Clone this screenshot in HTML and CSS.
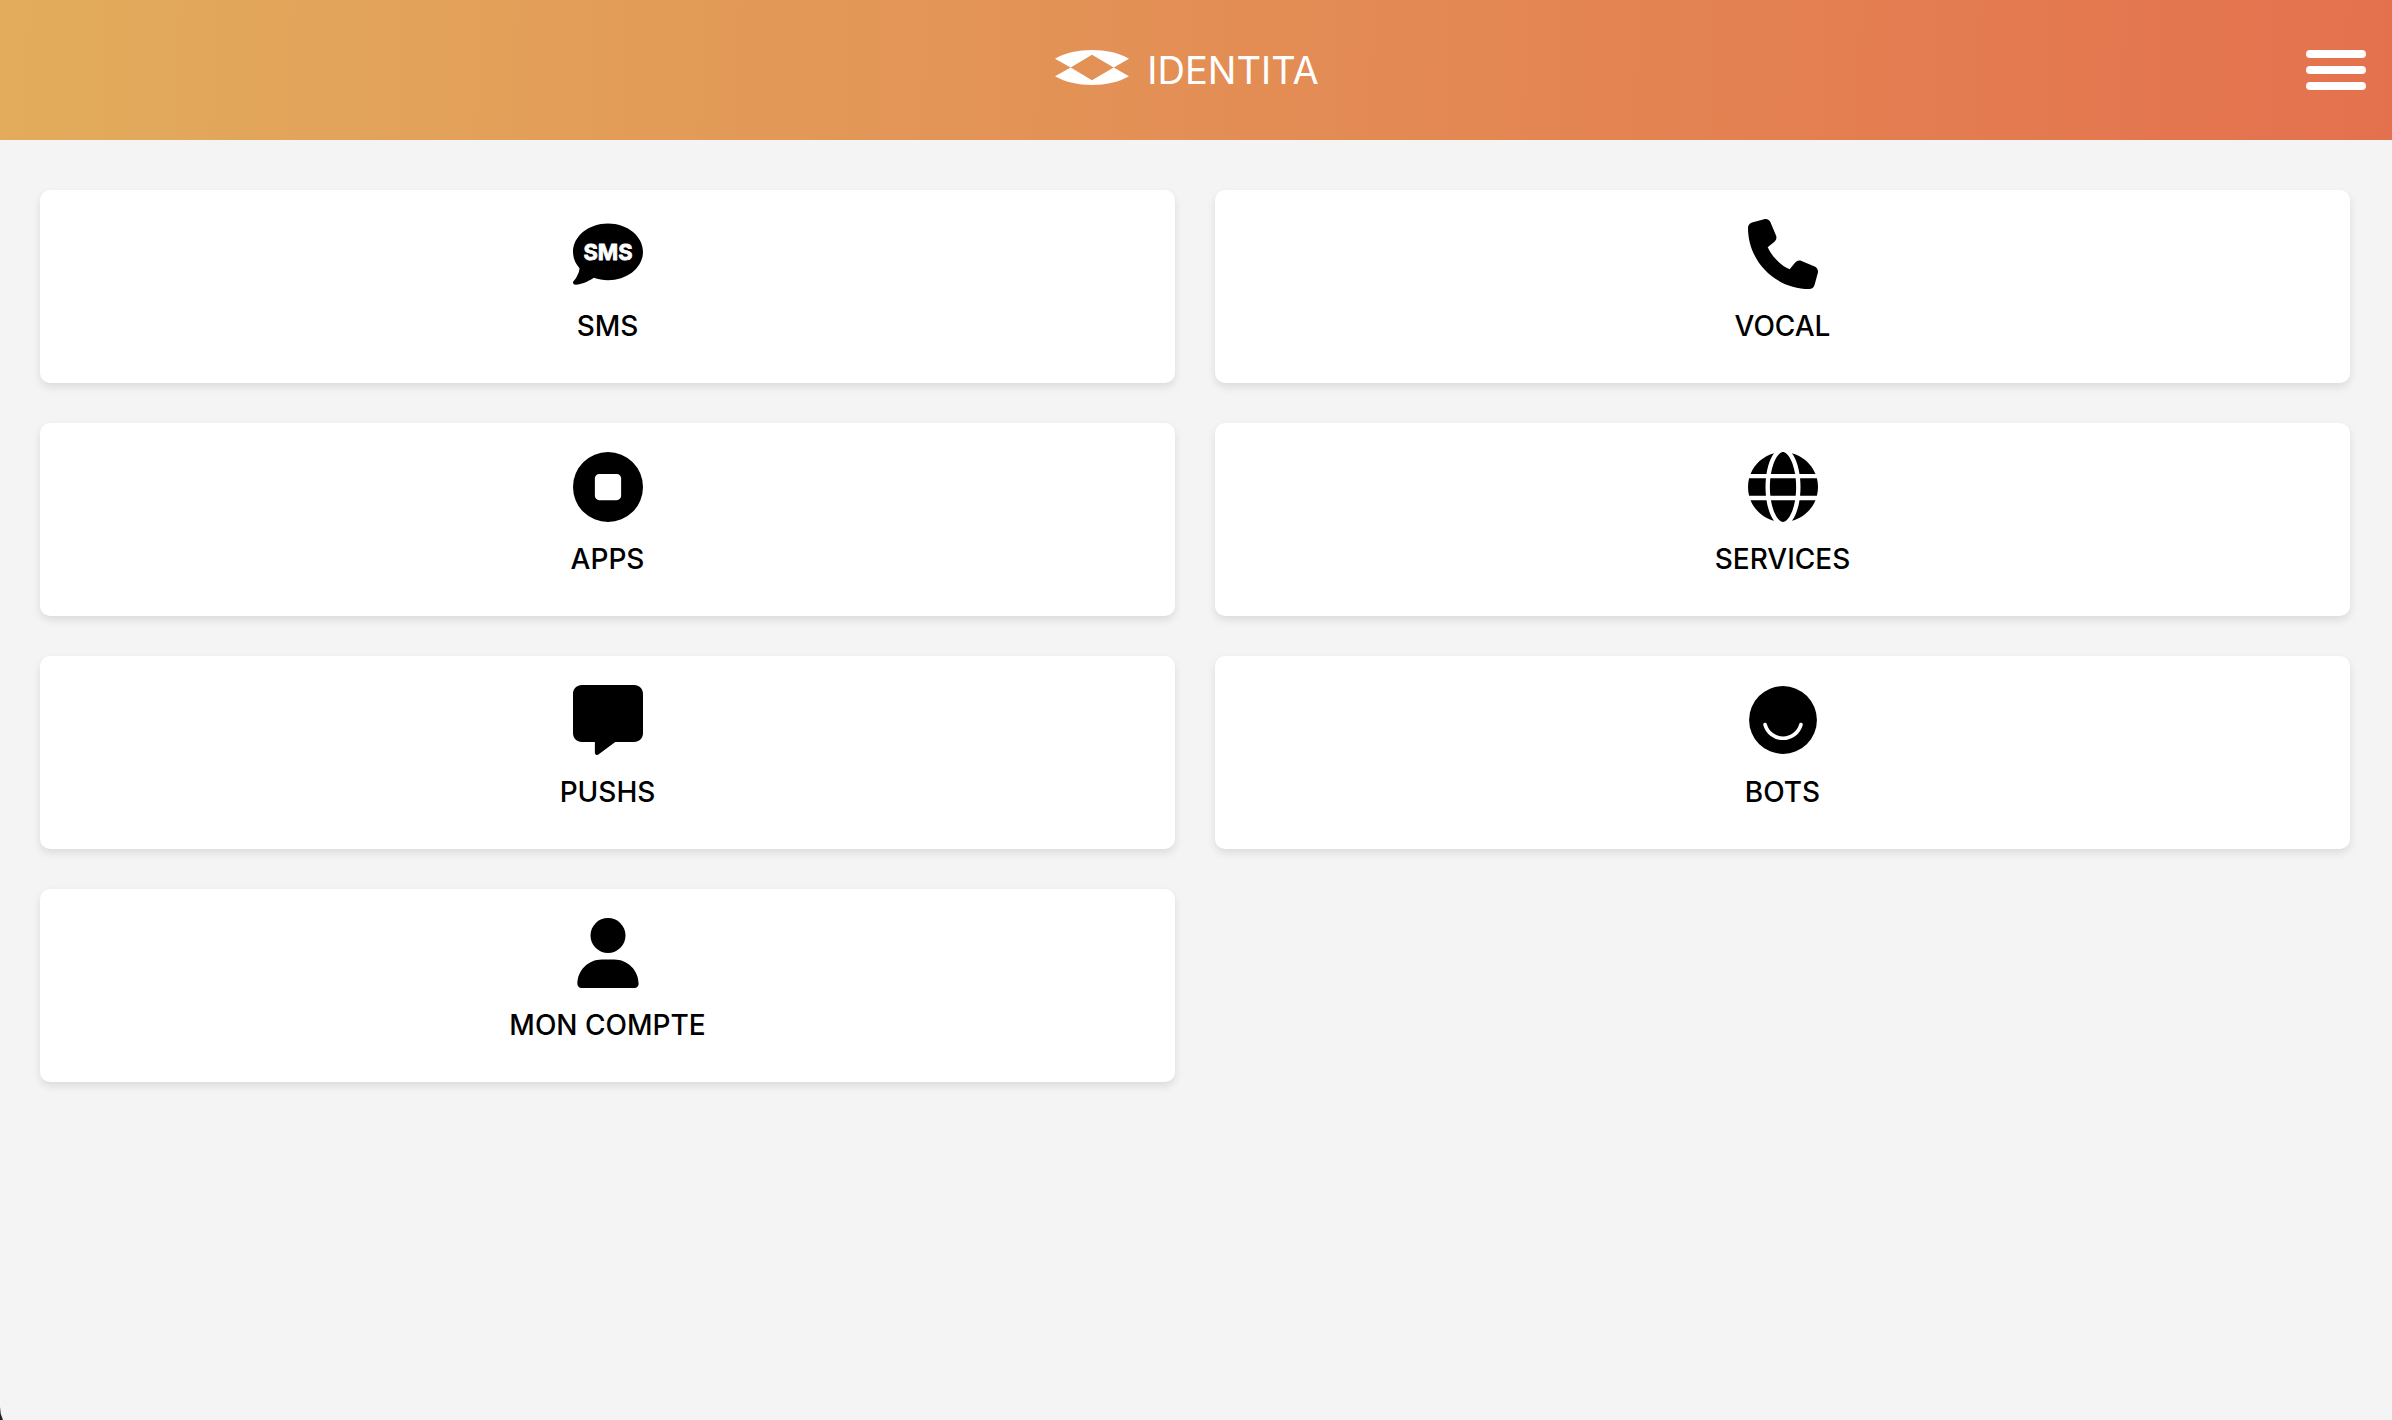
FILE: index.html
```html
<!DOCTYPE html>
<html lang="fr">
<head>
  <meta charset="UTF-8" />
  <meta name="viewport" content="width=device-width, initial-scale=1.0" />
  <title>Identita</title>
  <link rel="stylesheet" href="styles.css">
</head>
<body>

  <header class="header">
    <a class="brand" href="#">
      <svg class="logo" viewBox="80 60 222 105" aria-hidden="true">
        <path d="M80 86C112 68 150 60 191 60s79 8 111 26l-46 26.500L191 74l-64 38.500zM80 139l47-26.500L191 151l65-38.500L302 139c-32 18-70 26-111 26s-79-8-111-26z" />
      </svg>
      <span>IDENTITA</span>
    </a>
    <button class="menu" type="button" aria-label="Menu">
      <span class="bar"></span>
      <span class="bar"></span>
      <span class="bar"></span>
    </button>
  </header>

  <main class="grid">
    <a class="card" href="#sms">
      <svg class="icon" viewBox="0 0 512 512" aria-hidden="true">
        <path d="M256 448c141.400 0 256-93.100 256-208S397.400 32 256 32S0 125.100 0 240c0 45.100 17.700 86.800 47.700 120.900c-1.900 24.500-11.400 46.300-21.400 62.900c-5.500 9.200-11.100 16.600-15.200 21.600c-2.100 2.500-3.700 4.400-4.900 5.700l-1.600 1.700c-4.600 4.600-5.900 11.400-3.400 17.400c2.500 6 8.300 9.900 14.800 9.900c28.700 0 57.600-8.900 81.600-19.300c22.900-10 42.400-21.900 54.300-30.600c31.800 11.500 67 17.900 104.100 17.900z" />
        <text class="icon-text" x="256" y="300" text-anchor="middle">SMS</text>
      </svg>
      <span class="label">SMS</span>
    </a>

    <a class="card" href="#vocal">
      <svg class="icon" viewBox="0 0 512 512" aria-hidden="true">
        <path d="M164.900 24.600c-7.700-18.600-28-28.500-47.400-23.200l-88 24C12.100 30.200 0 46 0 64C0 311.400 200.600 512 448 512c18 0 33.800-12.100 38.600-29.500l24-88c5.300-19.400-4.600-39.700-23.200-47.400l-96-40c-16.300-6.800-35.200-2.100-46.300 11.600L304.700 368C234.300 334.700 177.300 277.700 144 207.300L193.300 167c13.700-11.200 18.400-30 11.600-46.300l-40-96z" />
      </svg>
      <span class="label">VOCAL</span>
    </a>

    <a class="card" href="#apps">
      <svg class="icon" viewBox="0 0 512 512" aria-hidden="true">
        <path fill-rule="evenodd" d="M256 512A256 256 0 1 0 256 0a256 256 0 1 0 0 512zM192 160H320c17.700 0 32 14.300 32 32V320c0 17.700-14.300 32-32 32H192c-17.700 0-32-14.300-32-32V192c0-17.700 14.300-32 32-32z" />
      </svg>
      <span class="label">APPS</span>
    </a>

    <a class="card" href="#services">
      <svg class="icon" viewBox="0 0 512 512" aria-hidden="true">
        <path d="M352 256c0 22.200-1.200 43.600-3.300 64H163.300c-2.200-20.400-3.300-41.800-3.300-64s1.200-43.600 3.300-64H348.700c2.200 20.400 3.300 41.800 3.300 64zm28.800-64H503.900c5.300 20.500 8.100 41.900 8.100 64s-2.800 43.500-8.100 64H380.800c2.100-20.600 3.200-42 3.200-64s-1.100-43.400-3.200-64zm112.600-32H376.700c-10-63.900-29.800-117.400-55.300-151.600c78.300 20.700 142 77.500 171.900 151.600zm-149.100 0H167.700c6.100-36.400 15.500-68.600 27-94.700c10.500-23.600 22.200-40.700 33.500-51.500C239.400 3.200 248.700 0 256 0s16.600 3.200 27.800 13.800c11.300 10.800 23 27.900 33.500 51.500c11.600 26 20.900 58.200 27 94.700zm-209 0H18.600C48.600 85.900 112.200 29.100 190.600 8.400C165.100 42.600 145.300 96.100 135.300 160zM8.100 192H131.200c-2.100 20.600-3.200 42-3.200 64s1.100 43.400 3.200 64H8.100C2.800 299.500 0 278.100 0 256s2.800-43.500 8.100-64zM194.700 446.600c-11.600-26-20.900-58.200-27-94.600H344.300c-6.100 36.400-15.500 68.600-27 94.600c-10.500 23.600-22.200 40.700-33.500 51.500C272.600 508.800 263.300 512 256 512s-16.600-3.200-27.800-13.800c-11.300-10.800-23-27.900-33.500-51.500zM135.300 352c10 63.900 29.800 117.400 55.300 151.600C112.200 482.900 48.600 426.100 18.600 352H135.300zm358.100 0c-30 74.100-93.600 130.900-171.900 151.600c25.500-34.200 45.200-87.700 55.300-151.600H493.400z" />
      </svg>
      <span class="label">SERVICES</span>
    </a>

    <a class="card" href="#pushs">
      <svg class="icon" viewBox="0 0 512 512" aria-hidden="true">
        <path d="M64 0C28.700 0 0 28.700 0 64V352c0 35.300 28.700 64 64 64h96v80c0 6.100 3.400 11.600 8.800 14.300s11.900 2.100 16.800-1.500L309.300 416H448c35.300 0 64-28.700 64-64V64c0-35.300-28.700-64-64-64H64z" />
      </svg>
      <span class="label">PUSHS</span>
    </a>

    <a class="card" href="#bots">
      <svg class="icon" viewBox="0 0 512 512" aria-hidden="true">
        <circle cx="256" cy="256" r="248" />
        <path class="smile" d="M125 290a136 136 0 0 0 262 0" />
      </svg>
      <span class="label">BOTS</span>
    </a>

    <a class="card" href="#compte">
      <svg class="icon" viewBox="-32 0 512 512" aria-hidden="true">
        <path d="M224 256A128 128 0 1 0 224 0a128 128 0 1 0 0 256zm-45.700 48C79.800 304 0 383.800 0 482.300C0 498.700 13.300 512 29.700 512H418.300c16.400 0 29.700-13.300 29.700-29.700C448 383.800 368.200 304 269.700 304H178.300z" />
      </svg>
      <span class="label">MON COMPTE</span>
    </a>
  </main>

  <svg class="corner" viewBox="0 0 3 13" aria-hidden="true">
    <path d="M0 0q0 7 3 13H0z" />
  </svg>

</body>
</html>
```

FILE: styles.css
```css
* { box-sizing: border-box; }

body {
  margin: 0;
  min-height: 100vh;
  background: #f4f4f4;
  color: black;
  font-family: Inter, "Liberation Sans", sans-serif;
}

.header {
  display: grid;
  grid-template-columns: 1fr auto 1fr;
  align-items: center;
  height: 140px;
  padding: 0 26px 0 8px;
  background: linear-gradient(92deg, #e2ac5c, #e4714e);
}
.brand {
  grid-column: 2;
  display: flex;
  align-items: center;
  gap: 18px;
  color: white;
  font-size: 38px;
  line-height: 48px;
  text-decoration: none;
}
.logo {
  width: 74px;
  height: 35px;
  margin-bottom: 6px;
  fill: white;
}

.menu {
  justify-self: end;
  display: flex;
  flex-direction: column;
  gap: 8px;
  width: 60px;
  padding: 0;
  border: none;
  background: transparent;
  cursor: pointer;
}
.bar {
  width: 100%;
  height: 8px;
  border-radius: 4px;
  background: white;
}

.grid {
  display: grid;
  grid-template-columns: 1fr 1fr;
  gap: 40px;
  padding: 50px 42px 40px 40px;
}
.card {
  display: flex;
  flex-direction: column;
  align-items: center;
  gap: 20px;
  padding: 29px 20px 39px;
  border-radius: 10px;
  background: white;
  box-shadow: 0 4px 8px rgba(0, 0, 0, 0.1);
  color: black;
  text-decoration: none;
}
.icon { width: 70px; height: 70px; }
.icon-text {
  fill: white;
  stroke: white;
  stroke-width: 6px;
  stroke-linejoin: round;
  font-size: 160px;
  font-weight: 700;
}
.smile {
  fill: none;
  stroke: white;
  stroke-width: 27px;
  stroke-linecap: round;
}
.label {
  font-size: 28px;
  font-weight: 500;
  line-height: 35px;
}

/* rounded window corner, bottom left */
.corner {
  position: fixed;
  left: 0;
  bottom: 0;
  width: 3px;
  height: 13px;
  fill: #222;
}
```
